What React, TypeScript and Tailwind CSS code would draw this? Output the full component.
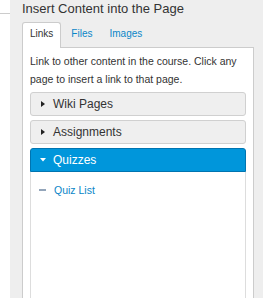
import React from "react";

// --- small caret icons for the accordion headers ---
const CaretRight = ({ className }: { className: string }) => (
  <svg viewBox="0 0 4 6" width="4" height="6" className={className}>
    <polygon points="0,0 4,3 0,6" fill="currentColor" />
  </svg>
);

const CaretDown = ({ className }: { className: string }) => (
  <svg viewBox="0 0 6 4" width="6" height="4" className={className}>
    <polygon points="0,0 6,0 3,3.5" fill="currentColor" />
  </svg>
);

const sections = ["Wiki Pages", "Assignments"];

export default function App() {
  return (
    <div className="w-[263px] h-[298px] overflow-hidden flex bg-white font-['Liberation_Sans',Arial,sans-serif]">
      {/* left strip of the page behind the sidebar */}
      <div className="w-[10px] shrink-0">
        <div className="h-[14px] border-b border-[#cccccc]" />
      </div>

      {/* sidebar panel */}
      <div className="flex-1 min-w-0 bg-[#eeeeee] pl-[12px] pr-[9px] flex flex-col">
        <h2 className="text-[13px] leading-[18px] text-[#333333] whitespace-nowrap">
          Insert Content into the Page
        </h2>

        {/* tabs */}
        <div className="mt-[4px] flex items-start text-[10px] leading-[14px] relative z-10">
          <div className="h-[26px] px-[7px] pt-[4px] bg-white border border-b-0 border-[#cccccc] rounded-t-[3px] text-[#333333]">
            Links
          </div>
          <div className="h-[26px] pl-[10px] pr-[8px] pt-[5px] text-[#0a86c8]">Files</div>
          <div className="h-[26px] pl-[9px] pr-[8px] pt-[5px] text-[#0a86c8]">Images</div>
        </div>

        {/* tab content */}
        <div className="flex-1 -mt-px bg-white border border-b-0 border-[#cccccc] px-[7px] pt-[4px] flex flex-col min-h-0">
          <p className="text-[10.5px] leading-[18px] text-[#333333]">
            Link to other content in the course. Click any page to insert a link to that page.
          </p>

          <div className="mt-[4px] flex flex-col gap-[4px] flex-1 min-h-0">
            {sections.map((s) => (
              <div
                key={s}
                className="h-[24px] shrink-0 flex items-center pl-[10px] bg-[#efefef] border border-[#d0d0d0] rounded-[3px] text-[12px] text-[#333333]"
              >
                <CaretRight className="text-[#222222]" />
                <span className="ml-[8px]">{s}</span>
              </div>
            ))}

            <div className="flex flex-col flex-1 min-h-0">
              <div className="h-[24px] shrink-0 flex items-center pl-[9px] bg-[#0096db] border border-[#0074b0] rounded-t-[3px] text-[12px] text-white">
                <CaretDown className="text-white" />
                <span className="ml-[7px]">Quizzes</span>
              </div>
              <div className="flex-1 border-x border-[#dddddd] pt-[11px] pl-[8px]">
                <div className="flex items-center text-[10.5px] leading-[14px] text-[#0a86c8]">
                  <span className="w-[7px] h-[2px] bg-[#93a5ba]" />
                  <span className="ml-[8px]">Quiz List</span>
                </div>
              </div>
            </div>
          </div>
        </div>
      </div>
    </div>
  );
}
